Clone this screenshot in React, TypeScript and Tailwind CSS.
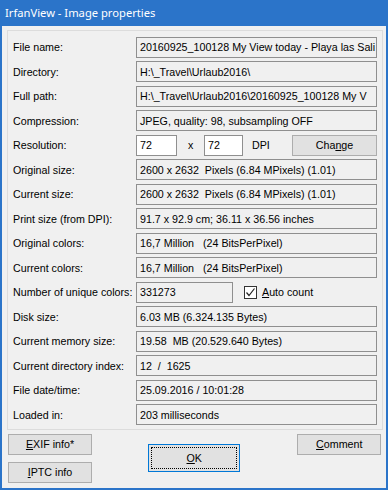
import React from "react";

const FONT = { fontFamily: '"Liberation Sans", Arial, sans-serif' };

const ROWS: { label: string; value?: string; kind?: "res" | "unique" }[] = [
  { label: "File name:", value: "20160925_100128 My View today - Playa las Sali" },
  { label: "Directory:", value: "H:\\_Travel\\Urlaub2016\\" },
  { label: "Full path:", value: "H:\\_Travel\\Urlaub2016\\20160925_100128 My V" },
  { label: "Compression:", value: "JPEG, quality: 98, subsampling OFF" },
  { label: "Resolution:", kind: "res" },
  { label: "Original size:", value: "2600 x 2632  Pixels (6.84 MPixels) (1.01)" },
  { label: "Current size:", value: "2600 x 2632  Pixels (6.84 MPixels) (1.01)" },
  { label: "Print size (from DPI):", value: "91.7 x 92.9 cm; 36.11 x 36.56 inches" },
  { label: "Original colors:", value: "16,7 Million   (24 BitsPerPixel)" },
  { label: "Current colors:", value: "16,7 Million   (24 BitsPerPixel)" },
  { label: "Number of unique colors:", kind: "unique" },
  { label: "Disk size:", value: "6.03 MB (6.324.135 Bytes)" },
  { label: "Current memory size:", value: "19.58  MB (20.529.640 Bytes)" },
  { label: "Current directory index:", value: "12  /  1625" },
  { label: "File date/time:", value: "25.09.2016 / 10:01:28" },
  { label: "Loaded in:", value: "203 milliseconds" },
];

function Field({ value, white, className = "" }: { value: string; white?: boolean; className?: string }) {
  return (
    <div
      className={`flex h-[21px] items-center overflow-hidden whitespace-pre border border-[#8f8f8f] px-[3px] ${
        white ? "bg-white" : "bg-[#f0f0f0]"
      } ${className}`}
    >
      {value}
    </div>
  );
}

function Btn({ children, className = "" }: { children: React.ReactNode; className?: string }) {
  return (
    <button className={`flex items-center justify-center border border-[#adadad] bg-[#e1e1e1] text-black ${className}`}>
      {children}
    </button>
  );
}

export default function App() {
  return (
    <div className="flex h-[490px] w-[388px] flex-col bg-[#2b74c9] px-[2px] pb-[2px] text-[10.7px] text-black" style={FONT}>
      {/* Title bar */}
      <div
        className="flex h-[26px] shrink-0 items-center pl-[3px] text-[11.2px] text-white"
        style={{ fontFamily: '"Noto Sans", "Open Sans", sans-serif' }}
      >
        IrfanView - Image properties
      </div>

      {/* Client area */}
      <div className="flex flex-1 flex-col bg-[#f0f0f0] px-[5px] pt-[4px]">
        <div className="flex h-[400px] w-[376px] flex-col gap-[3.47px] border border-[#dcdcdc] pl-[5px] pr-[5px] pt-[6px]">
          {ROWS.map((r) => (
            <div key={r.label} className="flex h-[21px] items-center">
              <div className="w-[123px] shrink-0 whitespace-nowrap">{r.label}</div>
              {r.kind === "res" ? (
                <div className="flex flex-1 items-center">
                  <Field value="72" white className="w-[41px]" />
                  <span className="ml-[11px] w-[16px]">x</span>
                  <Field value="72" white className="w-[39px]" />
                  <span className="ml-[9px]">DPI</span>
                  <Btn className="ml-auto h-[21px] w-[85px]">
                    Cha<span className="underline">n</span>ge
                  </Btn>
                </div>
              ) : r.kind === "unique" ? (
                <div className="flex flex-1 items-center">
                  <Field value="331273" className="w-[97px]" />
                  <span className="ml-[11px] grid h-[13px] w-[13px] place-items-center border border-[#333] bg-white">
                    <svg width="11" height="11" viewBox="0 0 11 11">
                      <polyline points="1.5,5.5 4,8.5 9.5,1.5" fill="none" stroke="#222" strokeWidth="1.2" />
                    </svg>
                  </span>
                  <span className="ml-[5px]">
                    <span className="underline">A</span>uto count
                  </span>
                </div>
              ) : (
                <Field value={r.value ?? ""} className="flex-1" />
              )}
            </div>
          ))}
        </div>

        {/* Buttons */}
        <div className="flex pl-[1px] pt-[4px]">
          <div className="flex flex-col gap-[7px]">
            <Btn className="h-[21px] w-[84px]">
              <span className="underline">E</span>XIF info*
            </Btn>
            <Btn className="h-[21px] w-[84px]">
              <span className="underline">I</span>PTC info
            </Btn>
          </div>
          <div className="ml-[56px] mt-[10px] h-[28px] w-[93px] border border-[#0078d7] bg-[#e1e1e1] p-[2px]">
            <div className="flex h-full w-full items-center justify-center border border-dotted border-black">
              <span className="underline">O</span>K
            </div>
          </div>
          <Btn className="ml-[57px] h-[21px] w-[84px]">
            <span className="underline">C</span>omment
          </Btn>
        </div>
      </div>
    </div>
  );
}
